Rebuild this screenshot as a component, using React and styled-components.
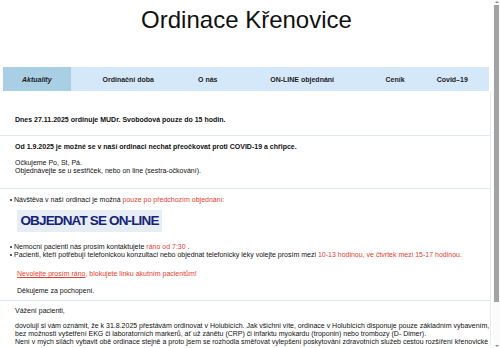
import React from "react";
import styled, { createGlobalStyle } from "styled-components";

const GlobalStyle = createGlobalStyle`
  html {
    overflow: hidden;
  }
  body {
    margin: 0;
    background: #ffffff;
    color: #111;
    font-family: "Liberation Sans", Arial, sans-serif;
  }
`;

const Page = styled.div`
  width: 493px;
`;

const Title = styled.h1`
  margin: 0;
  padding-top: 6px;
  height: 61px;
  font-size: 24px;
  line-height: 28px;
  font-weight: normal;
  text-align: center;
  color: #111;
`;

const Nav = styled.nav`
  display: flex;
  margin: 0 4px 0 3px;
  height: 24px;
  background: #d5e8f9;
`;

const NavItem = styled.a`
  display: flex;
  align-items: center;
  justify-content: center;
  width: ${(p) => p.w}px;
  font-size: 7px;
  font-weight: bold;
  font-style: ${(p) => (p.active ? "italic" : "normal")};
  background: ${(p) => (p.active ? "#a9cfe4" : "transparent")};
  color: #1c1c1c;
  white-space: nowrap;
`;

const Main = styled.main`
  width: 490px;
  border-right: 1px solid #e4ebf1;
`;

const Section = styled.section`
  padding: ${(p) => p.pad};
  border-bottom: ${(p) => (p.last ? "none" : "1px solid #dde7ee")};
  font-size: 7px;
  line-height: 8px;
`;

const Line = styled.p`
  margin: ${(p) => p.m || "0"};
  padding-left: ${(p) => p.indent || 15}px;
  font-weight: ${(p) => (p.bold ? "bold" : "normal")};
  white-space: nowrap;
`;

const Bullets = styled.ul`
  margin: ${(p) => p.m || "0"};
  padding-left: 14px;
  list-style: none;
`;

const Bullet = styled.li`
  position: relative;
  white-space: nowrap;
  &::before {
    content: "";
    position: absolute;
    left: -4px;
    top: 3px;
    width: 2px;
    height: 2px;
    border-radius: 50%;
    background: #222;
  }
`;

const Red = styled.span`
  color: #e8402f;
  text-decoration: ${(p) => (p.u ? "underline" : "none")};
`;

const OrderButton = styled.a`
  display: flex;
  align-items: center;
  justify-content: center;
  margin: 6px 0 0 17px;
  width: 145px;
  height: 22px;
  background: #e7edf5;
  color: #15237a;
  font-size: 13.5px;
  font-weight: bold;
  letter-spacing: -0.85px;
  white-space: nowrap;
`;

const Scrollbar = styled.div`
  position: fixed;
  top: 0;
  right: 0;
  width: 7px;
  height: 100vh;
  display: flex;
  flex-direction: column;
  align-items: center;
  background: #fbfbfb;
`;

const Arrow = styled.div`
  width: 0;
  height: 0;
  margin: 1px 0;
  border-left: 2px solid transparent;
  border-right: 2px solid transparent;
  ${(p) => (p.down ? "border-top" : "border-bottom")}: 2px solid #8a8a8a;
`;

const Thumb = styled.div`
  margin-top: 1px;
  width: 5px;
  height: 297px;
  background: #a3a3a3;
`;

const Track = styled.div`
  flex: 1;
`;

const navItems = [
  { label: "Aktuality", w: 68, active: true },
  { label: "Ordinační doba", w: 116 },
  { label: "O nás", w: 44 },
  { label: "ON-LINE objednání", w: 146 },
  { label: "Ceník", w: 41 },
  { label: "Covid–19", w: 74 },
];

export default function App() {
  return (
    <Page>
      <GlobalStyle />
      <Title>Ordinace Křenovice</Title>
      <Nav>
        {navItems.map((item) => (
          <NavItem key={item.label} w={item.w} active={item.active}>
            {item.label}
          </NavItem>
        ))}
      </Nav>
      <Main>
        <Section pad="25px 0 11px">
          <Line bold>Dnes 27.11.2025 ordinuje MUDr. Svobodová pouze do 15 hodin.</Line>
        </Section>
        <Section pad="7px 0 13px">
          <Line bold>
            Od 1.9.2025 je možné se v naší ordinaci nechat přeočkovat proti COVID-19 a chřipce.
          </Line>
          <Line m="8px 0 0">Očkujeme Po, St, Pá.</Line>
          <Line>Objednávejte se u sestřiček, nebo on line (sestra-očkování).</Line>
        </Section>
        <Section pad="7px 0 5px">
          <Bullets>
            <Bullet>
              Návštěva v naší ordinaci je možná <Red>pouze po předchozím objednání:</Red>
            </Bullet>
          </Bullets>
          <OrderButton>OBJEDNAT SE ON-LINE</OrderButton>
          <Bullets m="11px 0 0">
            <Bullet>
              Nemocní pacienti nás prosím kontaktujete <Red>ráno od 7:30</Red> .
            </Bullet>
            <Bullet>
              Pacienti, kteří potřebují telefonickou konzultaci nebo objednat telefonicky léky
              volejte prosím mezi <Red>10-13 hodinou, ve čtvrtek mezi 15-17 hodinou.</Red>
            </Bullet>
          </Bullets>
          <Line indent={17} m="11px 0 0">
            <Red u>Nevolejte prosím ráno</Red>
            <Red>, blokujete linku akutním pacientům!</Red>
          </Line>
          <Line indent={17} m="9px 0 0">Děkujeme za pochopení.</Line>
        </Section>
        <Section pad="6px 0 0" last>
          <Line>Vážení pacienti,</Line>
          <Line m="7px 0 0">
            dovoluji si vám oznámit, že k 31.8.2025 přestávám ordinovat v Holubicích. Jak všichni
            víte, ordinace v Holubicích disponuje pouze základním vybavením,
          </Line>
          <Line>
            bez možnosti vyšetření EKG či laboratorních markerů, ať už zánětu (CRP) či infarktu
            myokardu (troponin) nebo trombozy (D- Dimer).
          </Line>
          <Line>
            Není v mých silách vybavit obě ordinace stejně a proto jsem se rozhodla směřovat
            vylepšení poskytování zdravotních služeb cestou rozšíření křenovické
          </Line>
        </Section>
      </Main>
      <Scrollbar>
        <Arrow />
        <Thumb />
        <Track />
        <Arrow down />
      </Scrollbar>
    </Page>
  );
}
